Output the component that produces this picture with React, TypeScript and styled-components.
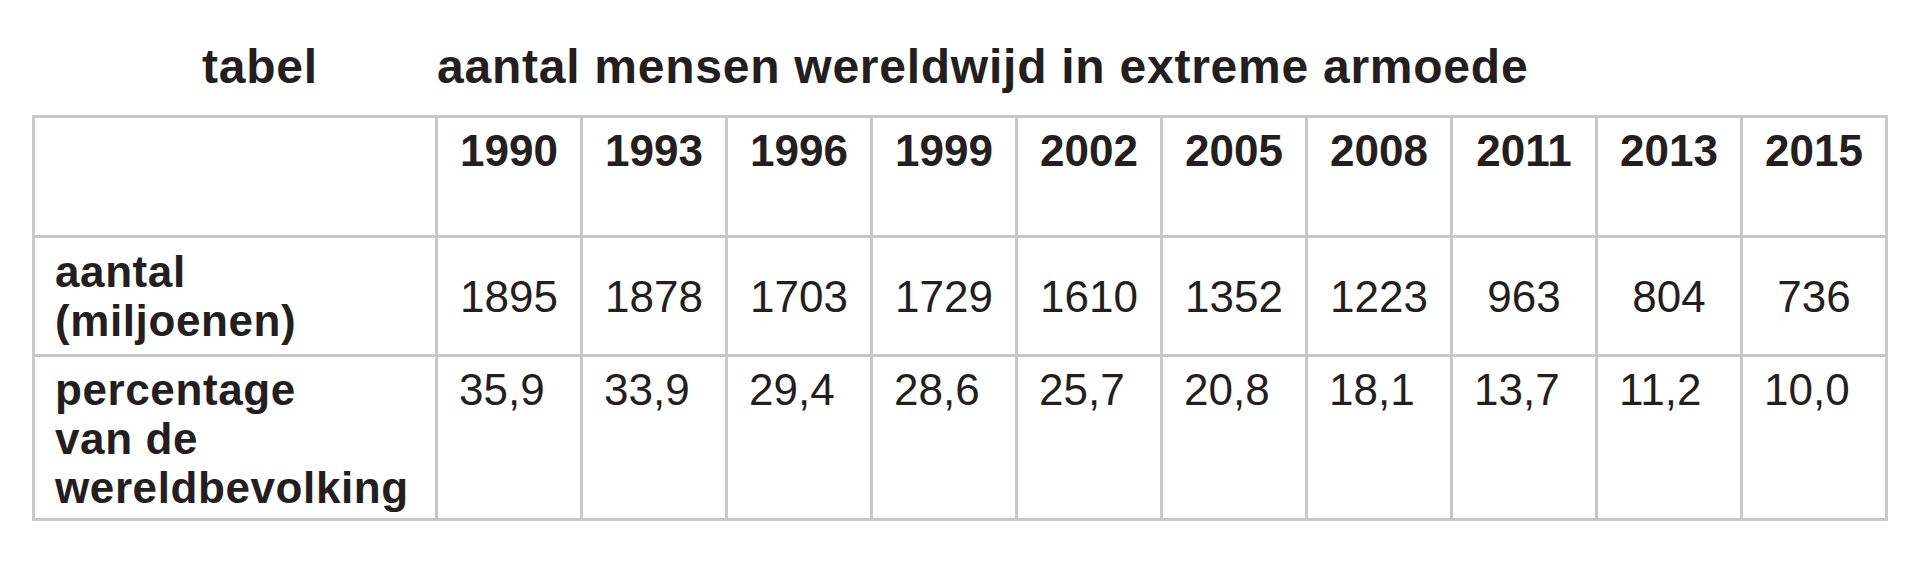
import React from 'react';
import styled, { createGlobalStyle } from 'styled-components';

const years = ['1990', '1993', '1996', '1999', '2002', '2005', '2008', '2011', '2013', '2015'];
const counts = ['1895', '1878', '1703', '1729', '1610', '1352', '1223', '963', '804', '736'];
const percentages = ['35,9', '33,9', '29,4', '28,6', '25,7', '20,8', '18,1', '13,7', '11,2', '10,0'];

const GlobalStyle = createGlobalStyle`
	body {
		margin: 0;
		background: #ffffff;
		font-family: "Liberation Sans", Arial, sans-serif;
		color: #231f20;
	}
`;

function App() {
	return (
		<Page>
			<GlobalStyle />
			<Caption>
				<CaptionLabel>tabel</CaptionLabel>
				<CaptionTitle>aantal mensen wereldwijd in extreme armoede</CaptionTitle>
			</Caption>
			<Table>
				<Cell />
				{years.map((year) => (
					<Cell key={year} $align="center" $bold>{year}</Cell>
				))}

				<Cell $bold $middle>aantal<br />(miljoenen)</Cell>
				{counts.map((count, index) => (
					<Cell key={index} $align="center" $middle>{count}</Cell>
				))}

				<Cell $bold>percentage<br />van de<br />wereldbevolking</Cell>
				{percentages.map((pct, index) => (
					<Cell key={index}>{pct}</Cell>
				))}
			</Table>
		</Page>
	);
}

export default App;

const Page = styled.div`
	width: 1920px;
	height: 577px;
	padding: 39px 0 0 32px;
	box-sizing: border-box;
	overflow: hidden;
`;

const Caption = styled.div`
	display: flex;
	flex-direction: row;
	height: 56px;
	margin-bottom: 20px;
	font-size: 48px;
	line-height: 56px;
	font-weight: bold;
	letter-spacing: 0.75px;
`;

const CaptionLabel = styled.div`
	width: 404px;
	padding-left: 170px;
	box-sizing: border-box;
`;

const CaptionTitle = styled.div`
	margin-left: 1px;
`;

const Table = styled.div`
	display: grid;
	grid-template-columns: 400px repeat(10, 142px);
	grid-template-rows: 117px 116px 161px;
	gap: 3px;
	padding: 3px;
	width: max-content;
	background-color: #c8c8c8;
`;

const Cell = styled.div<{ $align?: 'left' | 'center'; $bold?: boolean; $middle?: boolean }>`
	display: flex;
	flex-direction: column;
	justify-content: ${({ $middle }) => ($middle ? 'center' : 'flex-start')};
	align-items: ${({ $align }) => ($align === 'center' ? 'center' : 'flex-start')};
	padding-top: ${({ $middle }) => ($middle ? '0' : '8px')};
	padding-left: ${({ $bold, $align }) => ($align === 'center' ? '0' : $bold ? '20px' : '21px')};
	padding-right: ${({ $align }) => ($align === 'center' ? '0' : '21px')};
	box-sizing: border-box;
	background-color: #ffffff;
	font-size: 44px;
	line-height: 49px;
	font-weight: ${({ $bold }) => ($bold ? 'bold' : 'normal')};
	letter-spacing: ${({ $bold, $align }) => ($bold && $align !== 'center' ? '0.6px' : '0')};
	white-space: nowrap;
`;
